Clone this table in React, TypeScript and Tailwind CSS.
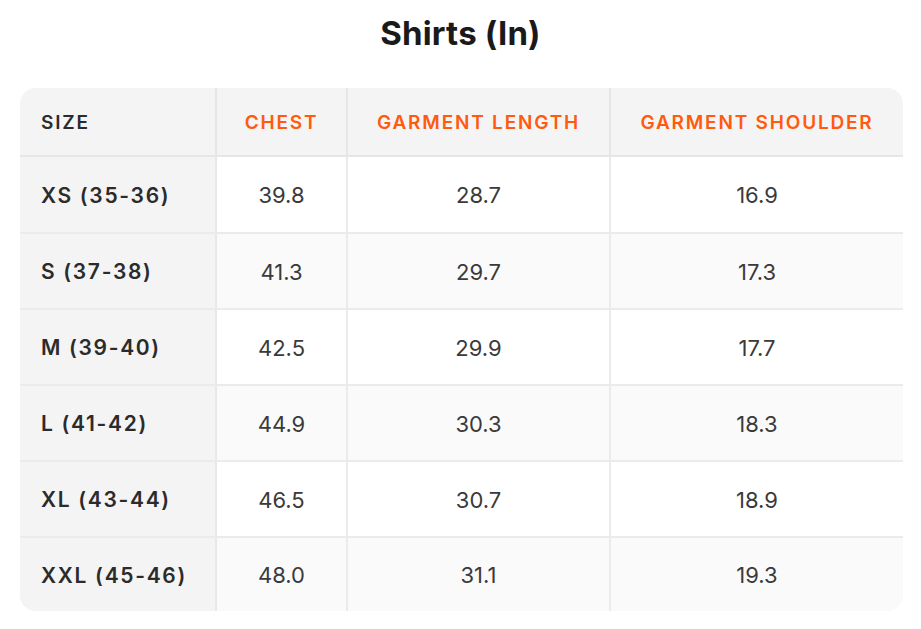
import React from "react";

const rows = [
  ["XS (35-36)", "39.8", "28.7", "16.9"],
  ["S (37-38)", "41.3", "29.7", "17.3"],
  ["M (39-40)", "42.5", "29.9", "17.7"],
  ["L (41-42)", "44.9", "30.3", "18.3"],
  ["XL (43-44)", "46.5", "30.7", "18.9"],
  ["XXL (45-46)", "48.0", "31.1", "19.3"],
];

export default function App() {
  return (
    <div className="min-h-[629px] w-[921px] bg-white pt-[13px]" style={{ fontFamily: "Inter, 'Noto Sans', sans-serif" }}>
      <h1 className="text-center text-[33px] leading-[40px] font-bold text-[#1a1a1a] tracking-[0.005em]">Shirts (In)</h1>
      <div className="ml-[20px] mt-[35px] w-[883px] overflow-hidden rounded-[16px] bg-[#f4f4f4]">
        <div className="grid grid-cols-[197px_131px_263px_292px] h-[69px] border-b-2 border-[#e6e6e6] bg-[#f4f4f4] text-[19px] font-semibold tracking-[0.095em]">
          <div className="flex items-center pt-[4px] pl-[21px] text-[#2b2b2b] border-r-2 border-[#e6e6e6]">SIZE</div>
          <div className="flex items-center justify-center pt-[4px] text-[#ff5a0e] border-r-2 border-[#e6e6e6]">CHEST</div>
          <div className="flex items-center justify-center pt-[4px] text-[#ff5a0e] border-r-2 border-[#e6e6e6]">GARMENT LENGTH</div>
          <div className="flex items-center justify-center pt-[4px] text-[#ff5a0e]">GARMENT SHOULDER</div>
        </div>
        {rows.map((r, i) => (
          <div
            key={r[0]}
            className={`grid grid-cols-[197px_131px_263px_292px] ${i === 0 || i === 5 ? "h-[75px]" : "h-[76px]"} ${i > 0 ? "border-t-2 border-[#ebebeb]" : ""} ${i % 2 === 0 ? "bg-white" : "bg-[#fafafa]"}`}
          >
            <div className="flex items-center pt-[2px] pl-[21px] bg-[#f4f4f4] text-[21px] font-semibold tracking-[0.08em] text-[#2b2b2b] border-r-2 border-[#e8e8e8]">{r[0]}</div>
            <div className="flex items-center justify-center pt-[2px] text-[22px] text-[#3a3a3a] border-r-2 border-[#ebebeb]">{r[1]}</div>
            <div className="flex items-center justify-center pt-[2px] text-[22px] text-[#3a3a3a] border-r-2 border-[#ebebeb]">{r[2]}</div>
            <div className="flex items-center justify-center pt-[2px] text-[22px] text-[#3a3a3a]">{r[3]}</div>
          </div>
        ))}
      </div>
    </div>
  );
}
